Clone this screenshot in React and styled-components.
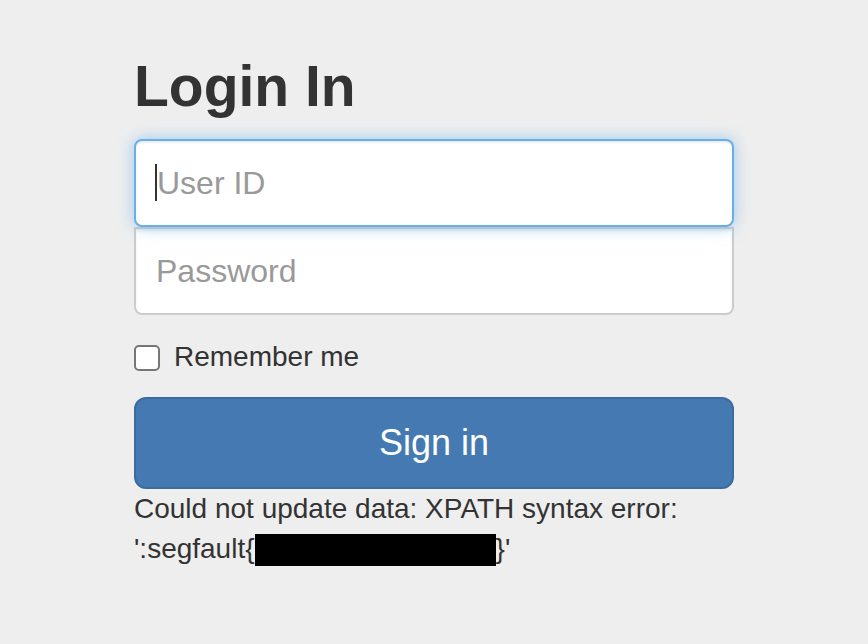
import styled, { createGlobalStyle } from "styled-components";

const GlobalStyle = createGlobalStyle`
  html, body {
    margin: 0;
    padding: 0;
    background-color: #eeeeee;
    font-family: "Liberation Sans", Arial, sans-serif;
    color: #333333;
  }
  * {
    box-sizing: border-box;
  }
`;

const Page = styled.div`
  padding-top: 53px;
  min-height: 644px;
`;

const Form = styled.form`
  width: 600px;
  margin: 0 auto;
  display: flex;
  flex-direction: column;
`;

const Heading = styled.h2`
  margin: 0 0 20px;
  font-size: 57px;
  line-height: 66px;
  font-weight: 700;
  color: #333333;
`;

const Field = styled.div`
  position: relative;
  z-index: ${(p) => (p.$focused ? 2 : 1)};
`;

const Input = styled.input`
  display: block;
  width: 100%;
  height: 88px;
  padding: 0 20px 0 ${(p) => (p.$focused ? "21px" : "20px")};
  font-family: inherit;
  font-size: 32px;
  color: #555555;
  background-color: #ffffff;
  border: 2px solid ${(p) => (p.$focused ? "#66afe9" : "#cccccc")};
  border-radius: ${(p) => (p.$first ? "8px" : "0 0 8px 8px")};
  box-shadow: ${(p) =>
    p.$focused
      ? "inset 0 2px 2px rgba(0,0,0,.075), 0 0 16px rgba(102,175,233,.6)"
      : "inset 0 2px 2px rgba(0,0,0,.075)"};
  outline: none;
  caret-color: transparent;

  &::placeholder {
    color: #999999;
  }
`;

/* the text cursor seen in the first field */
const Caret = styled.span`
  position: absolute;
  left: 21px;
  top: 25px;
  width: 2px;
  height: 37px;
  background: #333333;
`;

const CheckRow = styled.label`
  display: flex;
  align-items: center;
  gap: 14px;
  margin-top: 22px;
  height: 40px;
  font-size: 28px;
  line-height: 40px;
`;

const Box = styled.span`
  width: 26px;
  height: 26px;
  border: 2px solid #767676;
  border-radius: 5px;
  background: #ffffff;
  margin-top: 2px;
`;

const Button = styled.button`
  margin-top: 20px;
  height: 92px;
  width: 100%;
  font-family: inherit;
  font-size: 36px;
  color: #ffffff;
  background-color: #4479b1;
  border: 2px solid #3b6b9f;
  border-radius: 12px;
  cursor: pointer;
`;

const ErrorText = styled.p`
  margin: 0;
  font-size: 28px;
  line-height: 40px;
  color: #333333;
`;

const Redacted = styled.span`
  display: inline-block;
  width: 241px;
  height: 32px;
  background: #000000;
  vertical-align: -8px;
`;

export default function App() {
  return (
    <Page>
      <GlobalStyle />
      <Form onSubmit={(e) => e.preventDefault()}>
        <Heading>Login In</Heading>
        <Field $focused>
          <Input $first $focused placeholder="User ID" />
          <Caret />
        </Field>
        <Field>
          <Input type="password" placeholder="Password" />
        </Field>
        <CheckRow>
          <Box />
          Remember me
        </CheckRow>
        <Button type="submit">Sign in</Button>
        <ErrorText>
          Could not update data: XPATH syntax error:
          <br />
          ':segfault{"{"}
          <Redacted />
          {"}"}'
        </ErrorText>
      </Form>
    </Page>
  );
}
